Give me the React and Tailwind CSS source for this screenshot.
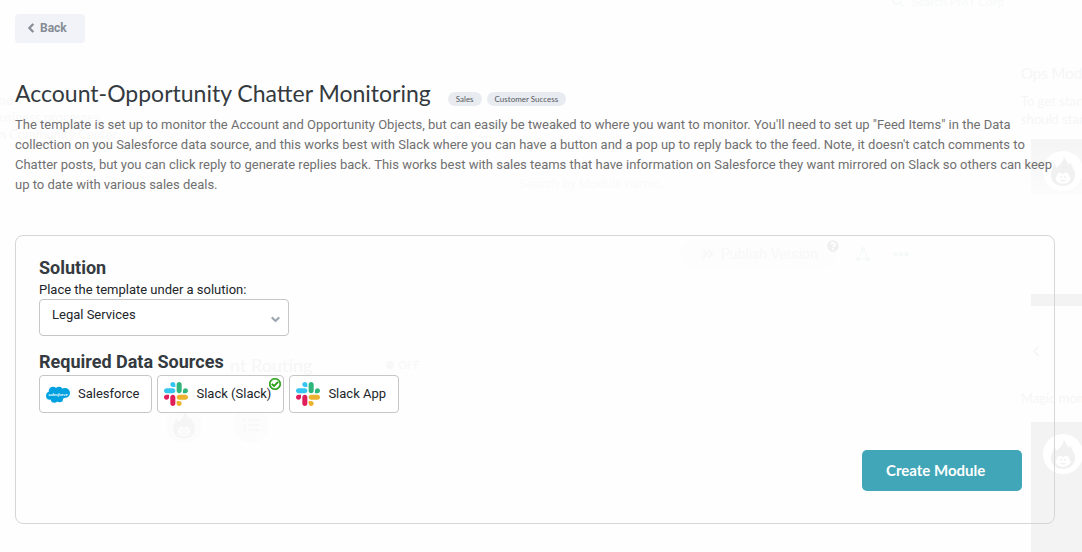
import { FaChevronLeft, FaChevronDown, FaRegCheckCircle, FaSearch, FaListUl, FaQuestionCircle, FaEllipsisH, FaAngleDoubleRight } from "react-icons/fa";

function SlackLogo() {
  return (
    <svg viewBox="0 0 122.8 122.8" className="size-6 shrink-0" aria-hidden="true">
      <path fill="#e01e5a" d="M25.8 77.6c0 7.1-5.8 12.9-12.9 12.9S0 84.7 0 77.6s5.8-12.9 12.9-12.9h12.9v12.9zm6.5 0c0-7.1 5.8-12.9 12.9-12.9s12.9 5.8 12.9 12.9v32.3c0 7.1-5.8 12.9-12.9 12.9s-12.9-5.8-12.9-12.9V77.6z" />
      <path fill="#36c5f0" d="M45.2 25.8c-7.1 0-12.9-5.8-12.9-12.9S38.1 0 45.2 0s12.9 5.8 12.9 12.9v12.9H45.2zm0 6.5c7.1 0 12.9 5.8 12.9 12.9s-5.8 12.9-12.9 12.9H12.9C5.8 58.1 0 52.3 0 45.2s5.8-12.9 12.9-12.9h32.3z" />
      <path fill="#2eb67d" d="M97 45.2c0-7.1 5.8-12.9 12.9-12.9s12.9 5.8 12.9 12.9-5.8 12.9-12.9 12.9H97V45.2zm-6.5 0c0 7.1-5.8 12.9-12.9 12.9s-12.9-5.8-12.9-12.9V12.9C64.7 5.8 70.5 0 77.6 0s12.9 5.8 12.9 12.9v32.3z" />
      <path fill="#ecb22e" d="M77.6 97c7.1 0 12.9 5.8 12.9 12.9s-5.8 12.9-12.9 12.9-12.9-5.8-12.9-12.9V97h12.9zm0-6.5c-7.1 0-12.9-5.8-12.9-12.9s5.8-12.9 12.9-12.9h32.3c7.1 0 12.9 5.8 12.9 12.9s-5.8 12.9-12.9 12.9H77.6z" />
    </svg>
  );
}

function SalesforceLogo() {
  return (
    <svg viewBox="0 0 72 51" className="h-[17px] w-6 shrink-0" aria-hidden="true">
      <g fill="#00a1e0">
        <circle cx="21" cy="15" r="13" />
        <circle cx="39" cy="13" r="11" />
        <circle cx="57" cy="21" r="15" />
        <circle cx="12" cy="29" r="12" />
        <circle cx="25" cy="39" r="11" />
        <circle cx="41" cy="39" r="10" />
        <path d="M12 18L40 8l17 12-2 16-16 9-22-4z" />
      </g>
      <text x="36" y="30" textAnchor="middle" fill="#fff" fontFamily="Liberation Serif, serif" fontStyle="italic" fontWeight="700" fontSize="14">salesforce</text>
    </svg>
  );
}

function Mascot({ className, bg = "#fff", fg = "#f1f1f1" }) {
  return (
    <svg viewBox="0 0 40 40" className={className} aria-hidden="true">
      <circle cx="20" cy="20" r="20" fill={bg} />
      <path fill={fg} d="M21 4c0 4 3 6 5 10l2-3c0 4 3 6 4 11 1 8-5 13-12 13S8 31 8 24c0-5 3-7 3-12 1 1 2 3 2 5 5-4 8-7 8-13z" />
      <path fill={bg} d="M14 25c0-4 5-4 6-1 1-3 6-3 6 1 1 1 2 2 1 4-2 5-12 5-14 0-1-2 0-3 1-4z" />
      <g fill={fg}><circle cx="18" cy="26" r="1" /><circle cx="22" cy="26" r="1" /><path d="M17 29h6c-1 2-5 2-6 0z" /></g>
    </svg>
  );
}

function Backdrop() {
  return (
    <div aria-hidden="true" className="pointer-events-none absolute inset-0 -z-10 flex overflow-hidden font-['Lato',sans-serif] text-[#f8f8f8]">
      <div className="min-w-0 flex-1">
        <div className="flex h-[10px] items-end justify-end gap-2 pr-[17px] text-xs text-[#f7f9f9]"><FaSearch className="mb-[3px] size-3" />Search PMT Corp</div>
        <div className="mt-[82px] -ml-2 text-[13px] leading-[17px]">and<br />business processes<br />an Community Center</div>
        <div className="mt-[33px] pl-[519px] font-['Roboto',sans-serif] text-[13px] leading-4 text-[#fafafa]">Search by Module name...</div>
        <div className="mt-12 flex h-7 items-center justify-end pr-28">
          <div className="relative flex h-7 w-[155px] items-center gap-[6px] rounded-full bg-[#fdfdfd] pl-5 font-['Roboto',sans-serif] text-sm">
            <FaAngleDoubleRight />
            Publish Version
            <FaQuestionCircle className="absolute top-0 -right-[3px] size-3 text-[#f0f0f0]" />
          </div>
          <svg viewBox="0 0 16 16" className="ml-[19px] size-4 text-[#f5f9f9]" fill="currentColor" stroke="currentColor"><path fill="none" d="M8 3L3 13h10z" /><circle cx="8" cy="3" r="1.5" /><circle cx="3" cy="13" r="1.5" /><circle cx="13" cy="13" r="1.5" /></svg>
          <FaEllipsisH className="ml-[22px] size-4 text-[#f5f9f9]" />
        </div>
        <div className="mt-[85px] flex h-6 items-center gap-[74px] pl-[230px]">
          <span className="text-lg leading-6 text-[#f6f6f6]">nt Routing</span>
          <span className="flex items-center gap-1 text-[11px] leading-4"><span className="size-2 rounded-full bg-[#f8f8f8]" />OFF</span>
        </div>
        <div className="mt-[30px] flex gap-[31px] pl-[166px]">
          <Mascot className="size-9" bg="#fcfcfc" fg="#f5f5f5" />
          <span className="flex size-9 items-center justify-center rounded-full bg-[#fcfcfc]"><FaListUl /></span>
        </div>
      </div>
      <div className="flex w-[61px] flex-col pt-16 whitespace-nowrap text-[#f6f6f6]">
        <div className="text-[15px] leading-[18px]">Ops Modules</div>
        <div className="mt-[10px] text-[13px] leading-[18px]">To get started<br />should start with</div>
        <div className="mt-[11px] ml-[10px] h-14 bg-linear-to-b from-[#f5f5f5] from-10% to-[#fcfcfc] pt-3 pl-3">
          <Mascot className="size-10 max-w-none" />
        </div>
        <div className="mt-[99px] ml-[10px] h-3 bg-[#f3f3f3]" />
        <FaChevronLeft className="mt-[39px] ml-[9px] size-3" />
        <div className="mt-8 text-[13px] leading-[18px]">Magic moments</div>
        <div className="mt-[15px] ml-[10px] flex-1 bg-[#f4f3f4] pt-3 pl-3">
          <Mascot className="size-10 max-w-none" />
        </div>
      </div>
    </div>
  );
}

function Tag({ children }) {
  return <span className="rounded-full bg-[#e8ebf0] px-2 text-[8px] leading-[14px] text-[#55595e]">{children}</span>;
}

function DataSource({ logo, name, connected }) {
  return (
    <button type="button" className="relative flex h-[38px] items-center gap-2 rounded border border-[#c6c6c6] bg-white pr-3 pl-[6px] text-[13px] text-[#212529]">
      {logo}
      {name}
      {connected && <FaRegCheckCircle className="absolute top-[2px] right-[2px] size-3 stroke-[#1f9d0c] stroke-[24px] text-[#1f9d0c]" />}
    </button>
  );
}

export default function App() {
  return (
    <div className="relative isolate min-h-screen bg-[#fefefe] font-['Roboto',sans-serif]">
      <Backdrop />
      <main className="pt-[14px] pr-[27px] pb-7 pl-[15px]">
        <button type="button" className="flex h-[29px] w-[70px] items-center gap-1 rounded bg-[#f2f3f8] pb-[2px] pl-[11px] text-xs font-bold text-[#868c93]">
          <FaChevronLeft className="size-[10px] stroke-current stroke-[40px]" />
          Back
        </button>

        <header className="mt-[35px]">
          <div className="flex items-baseline">
            <h1 className="mr-[17px] font-['Lato',sans-serif] text-[23px] leading-[30px] text-[#343a40]">Account-Opportunity Chatter Monitoring</h1>
            <div className="flex gap-[5px] font-['Lato',sans-serif]">
              <Tag>Sales</Tag>
              <Tag>Customer Success</Tag>
            </div>
          </div>
          <p className="mt-[7px] text-[13px] leading-5 text-[#707070]">
            The template is set up to monitor the Account and Opportunity Objects, but can easily be tweaked to where you want to monitor. You'll need to set up "Feed Items" in the Data collection on you Salesforce data source, and this works best with Slack where you can have a button and a pop up to reply back to the feed. Note, it doesn't catch comments to Chatter posts, but you can click reply to generate replies back. This works best with sales teams that have information on Salesforce they want mirrored on Slack so others can keep up to date with various sales deals.
          </p>
        </header>

        <section className="mt-10 rounded-lg border border-[#d6d6d6] px-[23px] pt-5 pb-8">
          <h2 className="text-lg leading-6 font-bold text-[#343a40]">Solution</h2>
          <label htmlFor="solution" className="block text-[13px] leading-[19px] text-[#212529]">Place the template under a solution:</label>
          <div className="relative w-[250px] max-w-full">
            <select id="solution" defaultValue="legal" className="block h-[37px] w-full appearance-none rounded border border-[#c6c6c6] bg-white pr-8 pb-[6px] pl-3 text-[13px] text-[#212529]">
              <option value="legal">Legal Services</option>
            </select>
            <FaChevronDown className="pointer-events-none absolute top-4 right-[9px] size-[9px] stroke-current stroke-[50px] text-[#96a0ab]" />
          </div>

          <h2 className="mt-[13px] text-lg leading-[26px] font-bold text-[#343a40]">Required Data Sources</h2>
          <div className="flex flex-wrap gap-[5px]">
            <DataSource logo={<SalesforceLogo />} name="Salesforce" />
            <DataSource logo={<SlackLogo />} name="Slack (Slack)" connected />
            <DataSource logo={<SlackLogo />} name="Slack App" />
          </div>

          <div className="mt-[37px] mr-[9px] flex justify-end">
            <button type="button" className="h-[41px] w-40 rounded-[5px] bg-[#40a6b8] pl-6 text-left font-['Lato',sans-serif] text-[15px] font-bold text-white">Create Module</button>
          </div>
        </section>
      </main>
    </div>
  );
}
